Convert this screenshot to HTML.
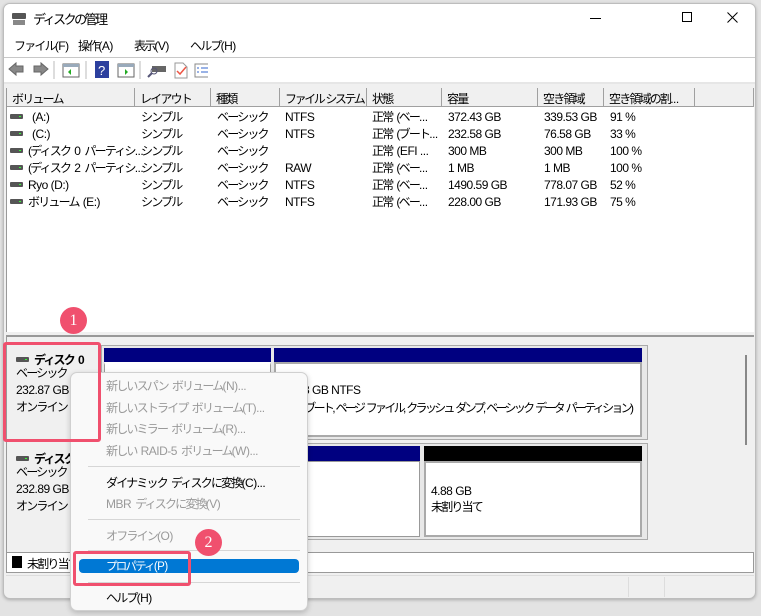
<!DOCTYPE html>
<html><head><meta charset="utf-8">
<style>
*{margin:0;padding:0;box-sizing:border-box}
body{width:761px;height:616px;background:#e3e3e3;font-family:"Liberation Sans","Noto Sans CJK JP",sans-serif;font-size:12px;color:#000;position:relative;overflow:hidden;letter-spacing:-1.8px;word-spacing:2.5px}
.n{letter-spacing:-0.5px;word-spacing:0}
.a{position:absolute;white-space:nowrap}
.win{position:absolute;left:3px;top:3px;width:753px;height:596px;background:#f0f0f0;border:1px solid #bdbdbd;border-radius:7px;overflow:hidden;box-shadow:0 1px 3px rgba(0,0,0,.25)}
.hd{position:absolute;top:88px;height:19px;background:#f0f0f0;border-right:1px solid #a0a0a0;border-bottom:1px solid #a0a0a0;padding:2px 0 0 5px;font-size:12px;overflow:hidden;white-space:nowrap}
.row{position:absolute;font-size:12px;white-space:nowrap}
.drv{display:inline-block;width:13px;height:5px;background:#555;border-radius:1px;position:relative;top:-2px;margin-right:5px}
.drv:after{content:"";position:absolute;right:2px;top:2px;width:2px;height:1px;background:#3f3}
.mi{position:absolute;left:106px;font-size:12px;color:#9a9a9a;white-space:nowrap}
.sep{position:absolute;left:88px;width:212px;height:1px;background:#d6d6d6}
</style></head><body>
<div class="win">
  <div class="a" style="left:0;top:0;width:753px;height:53px;background:#fff"></div>
  <div class="a" style="left:0;top:53px;width:753px;height:1px;background:#c8c8c8"></div>
  <div class="a" style="left:0;top:54px;width:753px;height:24px;background:#fff"></div>
  <div class="a" style="left:0;top:78px;width:753px;height:2px;background:#e6e6e6"></div>
</div>
<!-- title -->
<div class="a" style="left:12px;top:13px;width:14px;height:6px;background:#555;border-radius:1px"></div>
<div class="a" style="left:13px;top:20px;width:12px;height:5px;background:#888"></div>
<div class="a" style="left:33px;top:9px;font-size:13px;letter-spacing:-2.5px">ディスクの管理</div>
<div class="a" style="left:590px;top:18px;width:11px;height:1px;background:#000"></div>
<div class="a" style="left:682px;top:12px;width:10px;height:10px;border:1px solid #000"></div>
<svg class="a" style="left:727px;top:12px" width="11" height="11"><path d="M0.5 0.5 L10.5 10.5 M10.5 0.5 L0.5 10.5" stroke="#000" stroke-width="1"/></svg>
<!-- menu -->
<div class="a" style="left:14px;top:37px">ファイル<span class="n">(F)</span></div>
<div class="a" style="left:78px;top:37px">操作<span class="n">(A)</span></div>
<div class="a" style="left:134px;top:37px">表示<span class="n">(V)</span></div>
<div class="a" style="left:190px;top:37px">ヘルプ<span class="n">(H)</span></div>
<!-- toolbar -->
<svg class="a" style="left:8px;top:60px" width="200" height="20">
<path d="M1 9 L8 3 V6 H15 V12 H8 V15 Z" fill="#888" stroke="#666"/>
<path d="M40 9 L33 3 V6 H26 V12 H33 V15 Z" fill="#888" stroke="#666"/>
<line x1="46" y1="1" x2="46" y2="19" stroke="#bbb"/>
<rect x="55" y="4" width="16" height="13" fill="#fff" stroke="#666"/><rect x="55" y="4" width="16" height="3" fill="#9ab"/><path d="M63 9 V15 L60 12Z" fill="#2a2"/>
<line x1="78" y1="1" x2="78" y2="19" stroke="#bbb"/>
<rect x="87" y="1" width="14" height="17" fill="#2c3f9e"/><text x="90" y="15" fill="#fff" font-size="13" font-family="Liberation Sans">?</text>
<rect x="110" y="4" width="16" height="13" fill="#fff" stroke="#666"/><rect x="110" y="4" width="16" height="3" fill="#9ab"/><path d="M117 9 V15 L120 12Z" fill="#2a2"/>
<line x1="132" y1="1" x2="132" y2="19" stroke="#bbb"/>
<rect x="144" y="6" width="14" height="6" fill="#666"/><circle cx="146" cy="11" r="3" fill="none" stroke="#557"/><line x1="144" y1="13" x2="140" y2="17" stroke="#557" stroke-width="2"/>
<path d="M167 3 H175 L179 7 V18 H167Z" fill="#fff" stroke="#999"/><path d="M169 11 L172 14 L178 7" stroke="#e54" fill="none" stroke-width="1.5"/>
<rect x="187" y="4" width="15" height="13" fill="#fff" stroke="#888"/><path d="M189 8 H191 M193 8 H200 M189 12 H191 M193 12 H200" stroke="#36c"/>
</svg>
<!-- list -->
<div class="a" style="left:6px;top:88px;width:748px;height:244px;background:#fff;border-left:1px solid #999"></div>
<div class="hd" style="left:7px;width:128px">ボリューム</div>
<div class="hd" style="left:135px;width:76px">レイアウト</div>
<div class="hd" style="left:211px;width:69px">種類</div>
<div class="hd" style="left:280px;width:87px;letter-spacing:-2.4px;word-spacing:1px">ファイル システム</div>
<div class="hd" style="left:367px;width:75px">状態</div>
<div class="hd" style="left:442px;width:96px">容量</div>
<div class="hd" style="left:538px;width:66px">空き領域</div>
<div class="hd" style="left:604px;width:91px">空き領域の割<span class="n">...</span></div>
<div class="hd" style="left:695px;width:59px"></div>
<div class="row" style="left:10px;top:109px;line-height:17px">
<div><span class="drv"></span> <span class="n">(A:)</span></div><div><span class="drv"></span> <span class="n">(C:)</span></div><div><span class="drv"></span>(ディスク <span class="n">0</span> パーティシ<span class="n">...</span></div><div><span class="drv"></span>(ディスク <span class="n">2</span> パーティシ<span class="n">...</span></div><div><span class="drv"></span><span class="n">Ryo (D:)</span></div><div><span class="drv"></span>ボリューム <span class="n">(E:)</span></div></div>
<div class="row" style="left:141px;top:109px;line-height:17px">シンプル<br>シンプル<br>シンプル<br>シンプル<br>シンプル<br>シンプル</div>
<div class="row" style="left:217px;top:109px;line-height:17px">ベーシック<br>ベーシック<br>ベーシック<br>ベーシック<br>ベーシック<br>ベーシック</div>
<div class="row n" style="left:285px;top:109px;line-height:17px">NTFS<br>NTFS<br>&nbsp;<br>RAW<br>NTFS<br>NTFS</div>
<div class="row" style="left:372px;top:109px;line-height:17px">正常 (ベー<span class="n">...</span><br>正常 (ブート<span class="n">...</span><br>正常 <span class="n">(EFI ...</span><br>正常 (ベー<span class="n">...</span><br>正常 (ベー<span class="n">...</span><br>正常 (ベー<span class="n">...</span></div>
<div class="row n" style="left:448px;top:109px;line-height:17px">372.43 GB<br>232.58 GB<br>300 MB<br>1 MB<br>1490.59 GB<br>228.00 GB</div>
<div class="row n" style="left:544px;top:109px;line-height:17px">339.53 GB<br>76.58 GB<br>300 MB<br>1 MB<br>778.07 GB<br>171.93 GB</div>
<div class="row n" style="left:610px;top:109px;line-height:17px">91 %<br>33 %<br>100 %<br>100 %<br>52 %<br>75 %</div>
<div class="a" style="left:6px;top:335px;width:748px;height:2px;background:#999"></div>
<!-- graphical pane -->
<div class="a" style="left:6px;top:337px;width:1px;height:215px;background:#999"></div>
<div class="a" style="left:16px;top:351px;font-weight:bold"><span class="drv"></span>ディスク <span class="n">0</span></div>
<div class="a" style="left:16px;top:365px;line-height:17px">ベーシック<br><span class="n">232.87 GB</span><br>オンライン</div>
<div class="a" style="left:16px;top:450px;font-weight:bold"><span class="drv"></span>ディスク <span class="n">1</span></div>
<div class="a" style="left:16px;top:464px;line-height:17px">ベーシック<br><span class="n">232.89 GB</span><br>オンライン</div>
<!-- disk0 parts -->
<div class="a" style="left:101px;top:345px;width:547px;height:95px;border:1px solid #aaa;background:#e8e8e8"></div>
<div class="a" style="left:104px;top:348px;width:167px;height:14px;background:#000080"></div>
<div class="a" style="left:104px;top:362px;width:167px;height:75px;background:#fff;border:1px solid #999;border-top:3px solid #fff"></div>
<div class="a" style="left:274px;top:348px;width:368px;height:14px;background:#000080"></div>
<div class="a" style="left:274px;top:362px;width:368px;height:75px;background:#fff;border:2px solid #aaa;border-top-width:2px"></div>
<div class="a n" style="left:303px;top:383px">8 GB NTFS</div>
<div class="a" style="left:303px;top:399px;letter-spacing:-2.7px;word-spacing:2px">(ブート, ページ ファイル, クラッシュ ダンプ, ベーシック データ パーティション)</div>
<!-- disk1 parts -->
<div class="a" style="left:101px;top:443px;width:547px;height:97px;border:1px solid #aaa;background:#e8e8e8"></div>
<div class="a" style="left:104px;top:446px;width:316px;height:15px;background:#000080"></div>
<div class="a" style="left:104px;top:461px;width:316px;height:76px;background:#fff;border:1px solid #999"></div>
<div class="a" style="left:424px;top:446px;width:218px;height:15px;background:#000"></div>
<div class="a" style="left:424px;top:461px;width:218px;height:76px;background:#fff;border:2px solid #aaa"></div>
<div class="a" style="left:431px;top:483px;line-height:16px"><span class="n">4.88 GB</span><br>未割り当て</div>
<div class="a" style="left:745px;top:355px;width:2px;height:90px;background:#888"></div>
<!-- legend/status -->
<div class="a" style="left:6px;top:552px;width:748px;height:21px;background:#fff;border:1px solid #999"></div>
<div class="a" style="left:12px;top:556px;width:10px;height:12px;background:#000"></div>
<div class="a" style="left:27px;top:555px">未割り当て</div>
<div class="a" style="left:6px;top:575px;width:748px;height:1px;background:#ddd"></div>
<div class="a" style="left:664px;top:577px;width:1px;height:20px;background:#ddd"></div>
<div class="a" style="left:628px;top:577px;width:1px;height:20px;background:#ddd"></div>
<!-- context menu -->
<div class="a" style="left:70px;top:372px;width:238px;height:239px;background:#f9f9f9;border:1px solid #d0d0d0;border-radius:7px;box-shadow:0 2px 6px rgba(0,0,0,.2)"></div>
<div class="mi" style="top:377px">新しいスパン ボリューム<span class="n">(N)...</span></div>
<div class="mi" style="top:399px">新しいストライプ ボリューム<span class="n">(T)...</span></div>
<div class="mi" style="top:420px">新しいミラー ボリューム<span class="n">(R)...</span></div>
<div class="mi" style="top:442px">新しい <span class="n">RAID-5</span> ボリューム<span class="n">(W)...</span></div>
<div class="sep" style="top:466px"></div>
<div class="mi" style="top:474px;color:#000">ダイナミック ディスクに変換<span class="n">(C)...</span></div>
<div class="mi" style="top:495px"><span class="n">MBR</span> ディスクに変換<span class="n">(V)</span></div>
<div class="sep" style="top:519px"></div>
<div class="mi" style="top:527px">オフライン<span class="n">(O)</span></div>
<div class="sep" style="top:550px"></div>
<div class="a" style="left:79px;top:559px;width:220px;height:14px;background:#0078d4;border-radius:4px"></div>
<div class="mi" style="top:558px;color:#fff;font-size:11.5px">プロパティ<span class="n">(P)</span></div>
<div class="sep" style="top:582px"></div>
<div class="mi" style="top:589px;color:#000">ヘルプ<span class="n">(H)</span></div>
<!-- annotations -->
<div class="a" style="left:3px;top:342px;width:98px;height:100px;border:3px solid #f0506e;border-radius:3px"></div>
<div class="a" style="left:60px;top:307px;width:27px;height:27px;border-radius:50%;background:#f0506e;color:#fff;font-family:'Liberation Serif',serif;font-size:16px;text-align:center;line-height:27px;letter-spacing:0">1</div>
<div class="a" style="left:73px;top:551px;width:118px;height:35px;border:3px solid #f0506e;border-radius:3px"></div>
<div class="a" style="left:195px;top:529px;width:27px;height:27px;border-radius:50%;background:#f0506e;color:#fff;font-family:'Liberation Serif',serif;font-size:16px;text-align:center;line-height:27px;letter-spacing:0">2</div>
</body></html>
